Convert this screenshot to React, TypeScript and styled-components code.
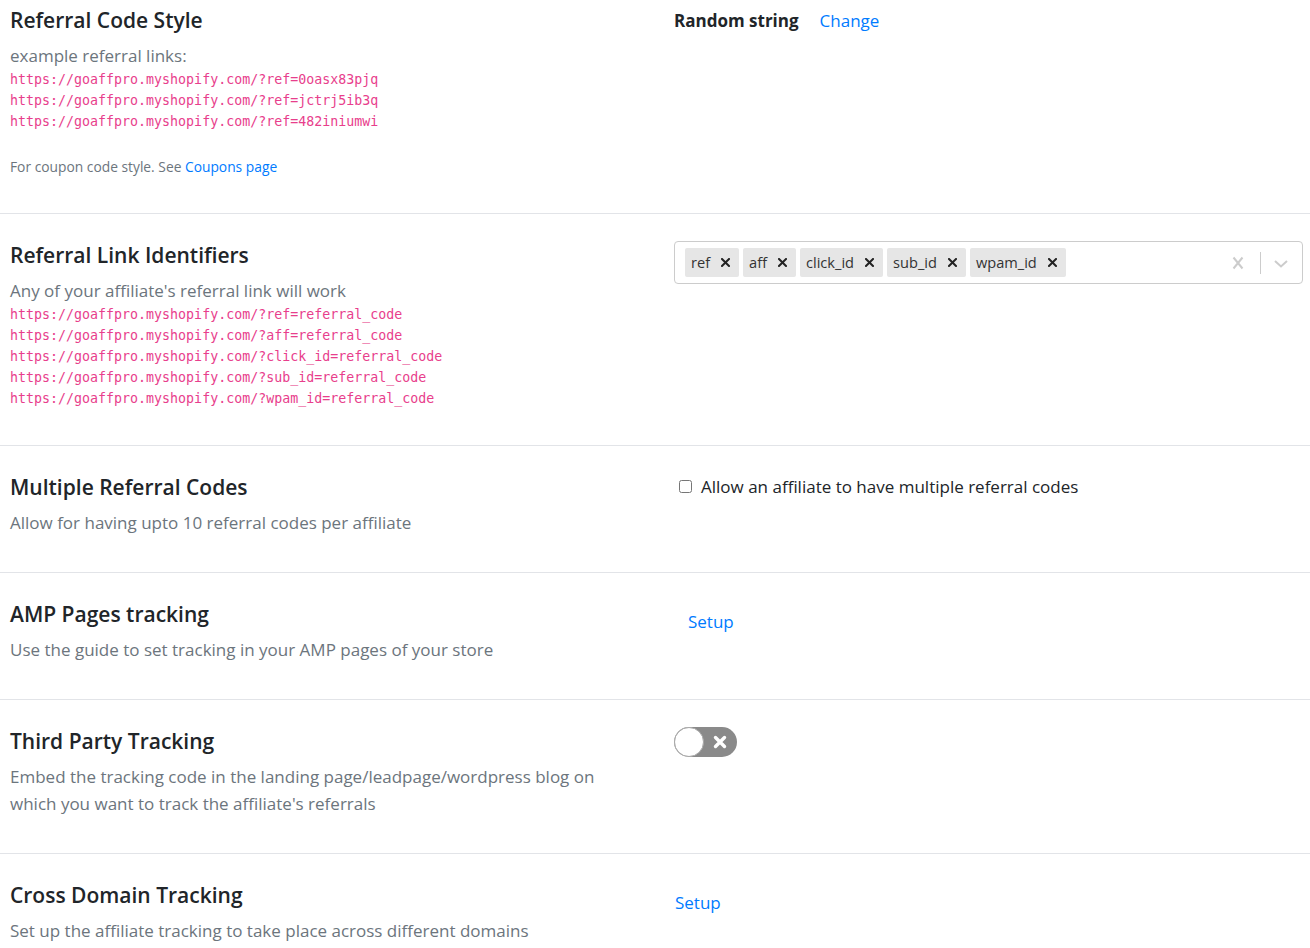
import styled, { createGlobalStyle } from "styled-components";

const GlobalStyle = createGlobalStyle`
  html, body {
    margin: 0;
    padding: 0;
    background: #ffffff;
  }
  body {
    font-family: "Open Sans", "Noto Sans", Arial, sans-serif;
    color: #212529;
  }
  * {
    box-sizing: border-box;
  }
`;

const Page = styled.div`
  width: 1310px;
`;

const Section = styled.section<{ $first?: boolean; $last?: boolean }>`
  display: grid;
  grid-template-columns: 654px 1fr;
  column-gap: 10px;
  align-items: start;
  padding: ${(p) => (p.$first ? "6px" : "27px")} 7px 36px 10px;
  border-bottom: ${(p) => (p.$last ? "none" : "1px solid #e2e4e8")};
`;

const Info = styled.div`
  display: flex;
  flex-direction: column;
  padding-right: 30px;
`;

const Title = styled.h4`
  margin: 0 0 7px;
  font-size: 21px;
  line-height: 29px;
  font-weight: 600;
  color: #212529;
`;

const Muted = styled.p`
  margin: 0;
  font-size: 17px;
  line-height: 27px;
  color: #6c757d;
`;

const CodeList = styled.div`
  display: flex;
  flex-direction: column;
`;

const Code = styled.code`
  font-family: "DejaVu Sans Mono", "Liberation Mono", monospace;
  font-size: 13.3px;
  line-height: 21px;
  color: #e83e8c;
`;

const Note = styled.p`
  margin: 24px 0 0;
  font-size: 13.8px;
  line-height: 21px;
  color: #6c757d;
`;

const Link = styled.a`
  color: #007bff;
  text-decoration: none;
  cursor: pointer;
`;

const Control = styled.div`
  display: flex;
  align-items: flex-start;
`;

const StyleRow = styled.div`
  display: flex;
  align-items: baseline;
  gap: 21px;
  line-height: 29px;
`;

const StyleName = styled.strong`
  font-size: 17px;
  font-weight: 700;
  color: #212529;
`;

const ChangeLink = styled(Link)`
  font-size: 17px;
`;

const SetupLink = styled(Link)<{ $indent?: boolean }>`
  display: inline-block;
  margin-top: 8px;
  padding-left: ${(p) => (p.$indent ? "14px" : "1px")};
  font-size: 17px;
  line-height: 27px;
`;

const SelectBox = styled.div`
  display: flex;
  align-items: center;
  width: 100%;
  height: 43px;
  border: 1px solid #cccccc;
  border-radius: 4px;
  background: #ffffff;
`;

const ValueList = styled.div`
  flex: 1;
  display: flex;
  flex-wrap: wrap;
  align-items: center;
  padding: 2px 8px;
`;

const Chip = styled.div`
  display: flex;
  align-items: center;
  height: 29px;
  margin: 2px;
  background: #e6e6e6;
  border-radius: 2px;
`;

const ChipLabel = styled.span`
  padding: 0 3px 0 6px;
  font-size: 14.6px;
  line-height: 23px;
  color: #333333;
`;

const ChipRemove = styled.span`
  display: flex;
  align-items: center;
  padding: 0 9px 0 8px;
  height: 100%;
  color: #222222;
`;

const Indicators = styled.div`
  display: flex;
  align-items: center;
  align-self: stretch;
`;

const Indicator = styled.span<{ $left: number; $right: number }>`
  display: flex;
  align-items: center;
  padding: 0 ${(p) => p.$right}px 0 ${(p) => p.$left}px;
  color: #cccccc;
`;

const IndicatorSeparator = styled.span`
  width: 1px;
  height: 22px;
  background: #cccccc;
`;

const CheckRow = styled.label`
  display: flex;
  align-items: center;
  line-height: 27px;
  font-size: 17px;
  color: #212529;
`;

const CheckBox = styled.input`
  width: 13px;
  height: 13px;
  margin: 0 9px 0 5px;
`;

const Toggle = styled.div`
  position: relative;
  width: 63px;
  height: 30px;
  border-radius: 15px;
  background: #8a8a8a;
`;

const Knob = styled.span`
  position: absolute;
  left: 0;
  top: 0;
  width: 30px;
  height: 30px;
  border-radius: 50%;
  background: #ffffff;
  border: 1px solid #a8a8a8;
`;

const ToggleMark = styled.span`
  position: absolute;
  right: 10px;
  top: 8px;
  display: flex;
`;

const SmallX = () => (
  <svg width="9" height="9" viewBox="0 0 9 9">
    <path d="M1 1L8 8M8 1L1 8" stroke="currentColor" strokeWidth="2" strokeLinecap="square" />
  </svg>
);

const ClearX = () => (
  <svg width="20" height="20" viewBox="0 0 20 20">
    <path d="M5.5 4.5L14.5 15.5M14.5 4.5L5.5 15.5" stroke="currentColor" strokeWidth="2" fill="none" />
  </svg>
);

const Chevron = () => (
  <svg width="20" height="20" viewBox="0 0 20 20">
    <path d="M4 8L10 13.5L16 8" stroke="currentColor" strokeWidth="2" fill="none" />
  </svg>
);

const BoldX = () => (
  <svg width="14" height="14" viewBox="0 0 14 14">
    <path d="M2.5 2.5L11.5 11.5M11.5 2.5L2.5 11.5" stroke="#ffffff" strokeWidth="3.4" strokeLinecap="round" />
  </svg>
);

const identifiers = ["ref", "aff", "click_id", "sub_id", "wpam_id"];
const sampleCodes = ["0oasx83pjq", "jctrj5ib3q", "482iniumwi"];
const shop = "https://goaffpro.myshopify.com/";

export default function App() {
  return (
    <>
      <GlobalStyle />
      <Page>
        <Section $first>
          <Info>
            <Title>Referral Code Style</Title>
            <Muted>example referral links:</Muted>
            <CodeList>
              {sampleCodes.map((c) => (
                <Code key={c}>{`${shop}?ref=${c}`}</Code>
              ))}
            </CodeList>
            <Note>
              For coupon code style. See <Link>Coupons page</Link>
            </Note>
          </Info>
          <Control>
            <StyleRow>
              <StyleName>Random string</StyleName>
              <ChangeLink>Change</ChangeLink>
            </StyleRow>
          </Control>
        </Section>

        <Section>
          <Info>
            <Title>Referral Link Identifiers</Title>
            <Muted>Any of your affiliate's referral link will work</Muted>
            <CodeList>
              {identifiers.map((id) => (
                <Code key={id}>{`${shop}?${id}=referral_code`}</Code>
              ))}
            </CodeList>
          </Info>
          <Control>
            <SelectBox>
              <ValueList>
                {identifiers.map((id) => (
                  <Chip key={id}>
                    <ChipLabel>{id}</ChipLabel>
                    <ChipRemove>
                      <SmallX />
                    </ChipRemove>
                  </Chip>
                ))}
              </ValueList>
              <Indicators>
                <Indicator $left={10} $right={12}>
                  <ClearX />
                </Indicator>
                <IndicatorSeparator />
                <Indicator $left={10} $right={11}>
                  <Chevron />
                </Indicator>
              </Indicators>
            </SelectBox>
          </Control>
        </Section>

        <Section>
          <Info>
            <Title>Multiple Referral Codes</Title>
            <Muted>Allow for having upto 10 referral codes per affiliate</Muted>
          </Info>
          <Control>
            <CheckRow>
              <CheckBox type="checkbox" />
              Allow an affiliate to have multiple referral codes
            </CheckRow>
          </Control>
        </Section>

        <Section>
          <Info>
            <Title>AMP Pages tracking</Title>
            <Muted>Use the guide to set tracking in your AMP pages of your store</Muted>
          </Info>
          <Control>
            <SetupLink $indent>Setup</SetupLink>
          </Control>
        </Section>

        <Section>
          <Info>
            <Title>Third Party Tracking</Title>
            <Muted>
              Embed the tracking code in the landing page/leadpage/wordpress blog on which you want to
              track the affiliate's referrals
            </Muted>
          </Info>
          <Control>
            <Toggle>
              <Knob />
              <ToggleMark>
                <BoldX />
              </ToggleMark>
            </Toggle>
          </Control>
        </Section>

        <Section $last>
          <Info>
            <Title>Cross Domain Tracking</Title>
            <Muted>Set up the affiliate tracking to take place across different domains</Muted>
          </Info>
          <Control>
            <SetupLink>Setup</SetupLink>
          </Control>
        </Section>
      </Page>
    </>
  );
}
